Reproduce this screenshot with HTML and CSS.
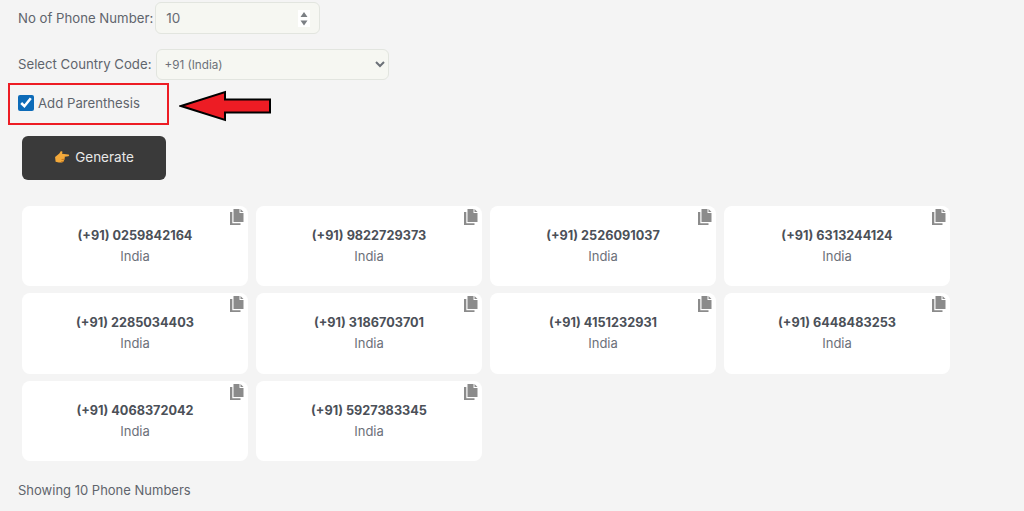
FILE: index.html
```html
<!DOCTYPE html>
<html lang="en">
<head>
<meta charset="utf-8">
<title>Phone Number Generator</title>
<link rel="stylesheet" href="styles.css">
</head>
<body>
<main class="page">
  <form class="form">
    <div class="row row-count">
      <label class="label" for="count">No of Phone Number:</label>
      <div class="number-input">
        <span id="count" class="value">10</span>
        <span class="spinner">
          <svg width="10" height="17" viewBox="0 0 10 17"><path class="spin" d="M5 2 8.500 7h-7zM1.500 10.500h7L5 15.500z"/></svg>
        </span>
      </div>
    </div>
    <div class="row row-country">
      <label class="label label-country" for="country">Select Country Code:</label>
      <select id="country" class="select"><option>+91 (India)</option></select>
    </div>
    <div class="row row-check">
      <input id="paren" class="check" type="checkbox" checked>
      <label class="check-label" for="paren">Add Parenthesis</label>
    </div>
    <button class="generate" type="button">
      <svg class="hand" width="16" height="15" viewBox="0 0 15 14"><path fill="#f4a93a" d="M1 6.500 5 3.200 6.500 1l1.500.5-.5 2 6 .8c1 .2 1 1.400 0 1.500l-3.500.4.200 1.200-.6 1.200-.2 1.300-1 .9-.6.900H4.500L1.500 11z"/><path fill="#c9791d" d="M7 8.500l3.200-.3-.1.8-3 .3zM6.500 10.400l2.900-.2-.2.8-2.600.2z"/></svg>
      Generate
    </button>
  </form>

  <section class="grid">
    <article class="card"><svg class="copy" viewBox="0 0 14 16"><path d="M3.500 0h6v4h4v9h-10z"/><path d="M10.500 0l3 3h-3z"/><path d="M0 3h2.300v11.200h8.200V16H0z"/></svg><div class="num">(+91) 0259842164</div><div class="country">India</div></article>
    <article class="card"><svg class="copy" viewBox="0 0 14 16"><path d="M3.500 0h6v4h4v9h-10z"/><path d="M10.500 0l3 3h-3z"/><path d="M0 3h2.300v11.200h8.200V16H0z"/></svg><div class="num">(+91) 9822729373</div><div class="country">India</div></article>
    <article class="card"><svg class="copy" viewBox="0 0 14 16"><path d="M3.500 0h6v4h4v9h-10z"/><path d="M10.500 0l3 3h-3z"/><path d="M0 3h2.300v11.200h8.200V16H0z"/></svg><div class="num">(+91) 2526091037</div><div class="country">India</div></article>
    <article class="card"><svg class="copy" viewBox="0 0 14 16"><path d="M3.500 0h6v4h4v9h-10z"/><path d="M10.500 0l3 3h-3z"/><path d="M0 3h2.300v11.200h8.200V16H0z"/></svg><div class="num">(+91) 6313244124</div><div class="country">India</div></article>
    <article class="card"><svg class="copy" viewBox="0 0 14 16"><path d="M3.500 0h6v4h4v9h-10z"/><path d="M10.500 0l3 3h-3z"/><path d="M0 3h2.300v11.200h8.200V16H0z"/></svg><div class="num">(+91) 2285034403</div><div class="country">India</div></article>
    <article class="card"><svg class="copy" viewBox="0 0 14 16"><path d="M3.500 0h6v4h4v9h-10z"/><path d="M10.500 0l3 3h-3z"/><path d="M0 3h2.300v11.200h8.200V16H0z"/></svg><div class="num">(+91) 3186703701</div><div class="country">India</div></article>
    <article class="card"><svg class="copy" viewBox="0 0 14 16"><path d="M3.500 0h6v4h4v9h-10z"/><path d="M10.500 0l3 3h-3z"/><path d="M0 3h2.300v11.200h8.200V16H0z"/></svg><div class="num">(+91) 4151232931</div><div class="country">India</div></article>
    <article class="card"><svg class="copy" viewBox="0 0 14 16"><path d="M3.500 0h6v4h4v9h-10z"/><path d="M10.500 0l3 3h-3z"/><path d="M0 3h2.300v11.200h8.200V16H0z"/></svg><div class="num">(+91) 6448483253</div><div class="country">India</div></article>
    <article class="card"><svg class="copy" viewBox="0 0 14 16"><path d="M3.500 0h6v4h4v9h-10z"/><path d="M10.500 0l3 3h-3z"/><path d="M0 3h2.300v11.200h8.200V16H0z"/></svg><div class="num">(+91) 4068372042</div><div class="country">India</div></article>
    <article class="card"><svg class="copy" viewBox="0 0 14 16"><path d="M3.500 0h6v4h4v9h-10z"/><path d="M10.500 0l3 3h-3z"/><path d="M0 3h2.300v11.200h8.200V16H0z"/></svg><div class="num">(+91) 5927383345</div><div class="country">India</div></article>
  </section>

  <p class="showing">Showing 10 Phone Numbers</p>

  <div class="annot-box"></div>
  <svg class="annot-arrow" width="94" height="36" viewBox="0 0 94 36"><path fill="#ed1c24" stroke="#000" stroke-width="2" d="M2 18 46 4v7.500h45v13H46V32z"/></svg>
</main>
</body>
</html>
```
FILE: styles.css
```css
* { box-sizing: border-box; }
html, body { margin: 0; padding: 0; background: #f4f4f4; }
body { font-family: Inter, "Noto Sans", "Liberation Sans", sans-serif; color: #555a63; }
.page { position: relative; width: 1024px; height: 511px; overflow: hidden; padding: 2px 0 0 18px; }
.form { display: flex; flex-direction: column; align-items: flex-start; }
.row { display: flex; align-items: center; }
.label { font-size: 13.200px; color: #5f646c; white-space: nowrap; }
.label-country { padding-bottom: 2px; }
.row-count { gap: 2px; }
.row-country { gap: 5px; margin-top: 15px; }
.number-input { width: 165px; height: 32px; border: 1px solid #e2e5df; border-radius: 6px; background: #f6f7f2; display: flex; align-items: center; justify-content: space-between; padding: 0 9px 0 10px; }
.value { font-size: 13.500px; color: #666b72; }
.spinner { width: 12px; height: 17px; background: #fff; display: flex; justify-content: center; }
.spin { fill: #7b7f84; }
.select { width: 233px; height: 31px; border: 1px solid #e2e5df; border-radius: 6px; background-color: #f6f7f2; font-family: inherit; font-size: 11.700px; color: #6c7178; padding-left: 3px; }
.row-check { margin-top: 14px; gap: 4px; height: 18px; }
.check { width: 16px; height: 16px; margin: 0; accent-color: #0d6bb8; }
.check-label { font-size: 13.200px; color: #5f646c; }
.generate { margin: 24px 0 0 4px; width: 144px; height: 44px; border: 0; border-radius: 6px; background: #3a3a3a; color: #e8e8e8; font-family: inherit; font-size: 13.500px; display: flex; align-items: center; justify-content: center; gap: 5px; padding: 0 0 2px; }
.grid { display: grid; grid-template-columns: repeat(4, 226px); grid-auto-rows: 80.400px; gap: 7px 8px; margin: 26px 0 0 4px; }
.card { position: relative; background: #fff; border-radius: 8px; display: flex; flex-direction: column; align-items: center; padding-top: 21px; }
.copy { position: absolute; top: 3px; right: 4px; width: 14px; height: 16px; fill: #8b8b8b; }
.num { font-size: 12.700px; font-weight: 700; color: #4b5058; line-height: 18px; }
.country { font-size: 13px; color: #6c717a; line-height: 18px; margin-top: 2px; }
.showing { margin: 21px 0 0; font-size: 13px; color: #5f646c; }
.annot-box { position: absolute; left: 8px; top: 83px; width: 161px; height: 42px; border: 2px solid #ed1c24; }
.annot-arrow { position: absolute; left: 179px; top: 88px; }
```
